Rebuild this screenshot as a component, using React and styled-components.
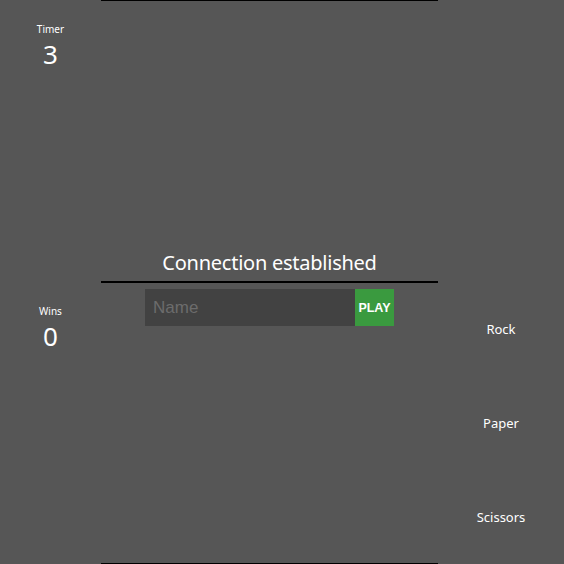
import React from "react";
import styled, { createGlobalStyle } from "styled-components";

const Global = createGlobalStyle`
  html, body { margin: 0; padding: 0; background: #565656; }
  body { font-family: "Noto Sans", "Open Sans", sans-serif; color: #fff; }
`;

const Layout = styled.div`
  display: grid;
  grid-template-columns: 101px 337px 1fr;
  height: 564px;
  overflow: hidden;
`;

const Side = styled.div`
  display: grid;
  grid-template-rows: 1fr 1fr;
`;

const Stat = styled.div`
  display: flex;
  flex-direction: column;
  align-items: center;
  padding-top: 22px;
`;

const StatLabel = styled.div`
  font-size: 10px;
  line-height: 14px;
`;

const StatValue = styled.div`
  font-size: 26px;
  line-height: 32px;
  margin-top: 2px;
`;

const Center = styled.div`
  display: grid;
  grid-template-rows: 1fr 2px 1fr;
  border-top: 1px solid #000;
  border-bottom: 1px solid #000;
`;

const Half = styled.div`
  display: flex;
  flex-direction: column;
  align-items: center;
  justify-content: ${(p) => (p.$bottom ? "flex-end" : "flex-start")};
  padding: ${(p) => (p.$bottom ? "0 0 4px" : "6px 0 0")};
`;

const Status = styled.div`
  font-size: 20px;
  letter-spacing: -0.25px;
  line-height: 28px;
`;

const Divider = styled.div`
  background: #000;
`;

const Form = styled.form`
  display: flex;
  height: 37px;
`;

const NameInput = styled.input`
  width: 210px;
  box-sizing: border-box;
  border: none;
  outline: none;
  background: #424242;
  color: #fff;
  font-family: "Liberation Sans", Arial, sans-serif;
  font-size: 17px;
  padding: 1px 8px 0;
  &::placeholder { color: #6c6c6c; }
`;

const PlayButton = styled.button`
  width: 39px;
  border: none;
  background: #3a9a3f;
  color: #fff;
  font-family: "Liberation Sans", Arial, sans-serif;
  font-size: 12.5px;
  font-weight: bold;
  padding: 0;
`;

const Choices = styled.div`
  display: grid;
  grid-template-rows: repeat(3, 1fr);
`;

const Choice = styled.div`
  display: flex;
  align-items: center;
  justify-content: center;
  font-size: 13px;
`;

export default function App() {
  return (
    <>
      <Global />
      <Layout>
        <Side>
          <Stat>
            <StatLabel>Timer</StatLabel>
            <StatValue>3</StatValue>
          </Stat>
          <Stat>
            <StatLabel>Wins</StatLabel>
            <StatValue>0</StatValue>
          </Stat>
        </Side>
        <Center>
          <Half $bottom>
            <Status>Connection established</Status>
          </Half>
          <Divider />
          <Half>
            <Form onSubmit={(e) => e.preventDefault()}>
              <NameInput placeholder="Name" />
              <PlayButton type="submit">PLAY</PlayButton>
            </Form>
          </Half>
        </Center>
        <Side>
          <div />
          <Choices>
            <Choice>Rock</Choice>
            <Choice>Paper</Choice>
            <Choice>Scissors</Choice>
          </Choices>
        </Side>
      </Layout>
    </>
  );
}
